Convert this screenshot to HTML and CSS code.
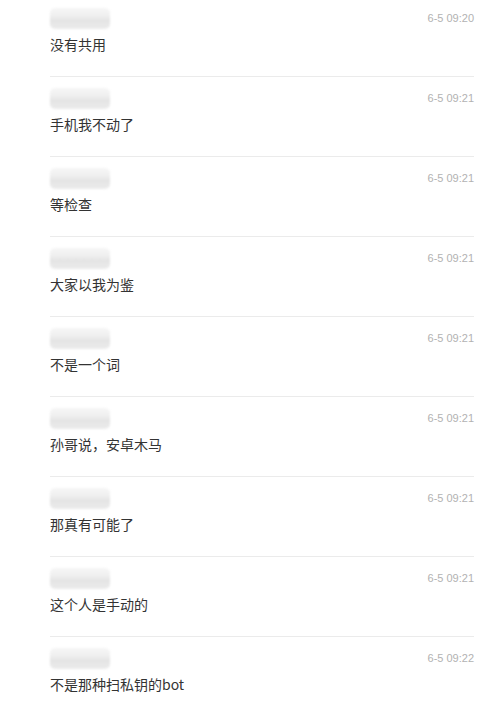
FILE: index.html
```html
<!DOCTYPE html>
<html lang="zh-CN">
<head>
    <meta charset="UTF-8">
    <meta name="viewport" content="width=device-width, initial-scale=1.0">
    <title>消息</title>
<link rel="stylesheet" href="styles.css">
</head>
<body>
    <div class="msg-list">
        <div class="msg">
            <div class="msg-head"><span class="name"></span><span class="time">6-5 09:20</span></div>
            <div class="text">没有共用</div>
        </div>
        <div class="msg">
            <div class="msg-head"><span class="name"></span><span class="time">6-5 09:21</span></div>
            <div class="text">手机我不动了</div>
        </div>
        <div class="msg">
            <div class="msg-head"><span class="name"></span><span class="time">6-5 09:21</span></div>
            <div class="text">等检查</div>
        </div>
        <div class="msg">
            <div class="msg-head"><span class="name"></span><span class="time">6-5 09:21</span></div>
            <div class="text">大家以我为鉴</div>
        </div>
        <div class="msg">
            <div class="msg-head"><span class="name"></span><span class="time">6-5 09:21</span></div>
            <div class="text">不是一个词</div>
        </div>
        <div class="msg">
            <div class="msg-head"><span class="name"></span><span class="time">6-5 09:21</span></div>
            <div class="text">孙哥说，安卓木马</div>
        </div>
        <div class="msg">
            <div class="msg-head"><span class="name"></span><span class="time">6-5 09:21</span></div>
            <div class="text">那真有可能了</div>
        </div>
        <div class="msg">
            <div class="msg-head"><span class="name"></span><span class="time">6-5 09:21</span></div>
            <div class="text">这个人是手动的</div>
        </div>
        <div class="msg">
            <div class="msg-head"><span class="name"></span><span class="time">6-5 09:22</span></div>
            <div class="text">不是那种扫私钥的bot</div>
        </div>
    </div>
</body>
</html>
```
FILE: styles.css
```css
body {
    margin: 0;
    background-color: #fff;
    font-family: "Noto Sans CJK SC", "Microsoft YaHei", sans-serif;
    overflow: hidden;
}

.msg-list {
    margin: -3px 23px 0 50px;
}

.msg {
    height: 80px;
    box-sizing: border-box;
    padding-top: 10px;
    border-bottom: 1px solid #ebebeb;
}

.msg-head {
    display: flex;
    justify-content: space-between;
    align-items: center;
    height: 22px;
}

/* 打码的昵称 */
.name {
    width: 60px;
    height: 21px;
    border-radius: 5px;
    background: linear-gradient(#f6f6f6 0%, #f0f0f0 35%, #e4e4e4 60%, #ececec 100%);
    filter: blur(1px);
}

.time {
    font-family: "Liberation Sans", Arial, sans-serif;
    font-size: 11px;
    color: #b2b2b2;
}

.text {
    margin-top: 5px;
    font-size: 14px;
    line-height: 20px;
    color: #333;
}
```
